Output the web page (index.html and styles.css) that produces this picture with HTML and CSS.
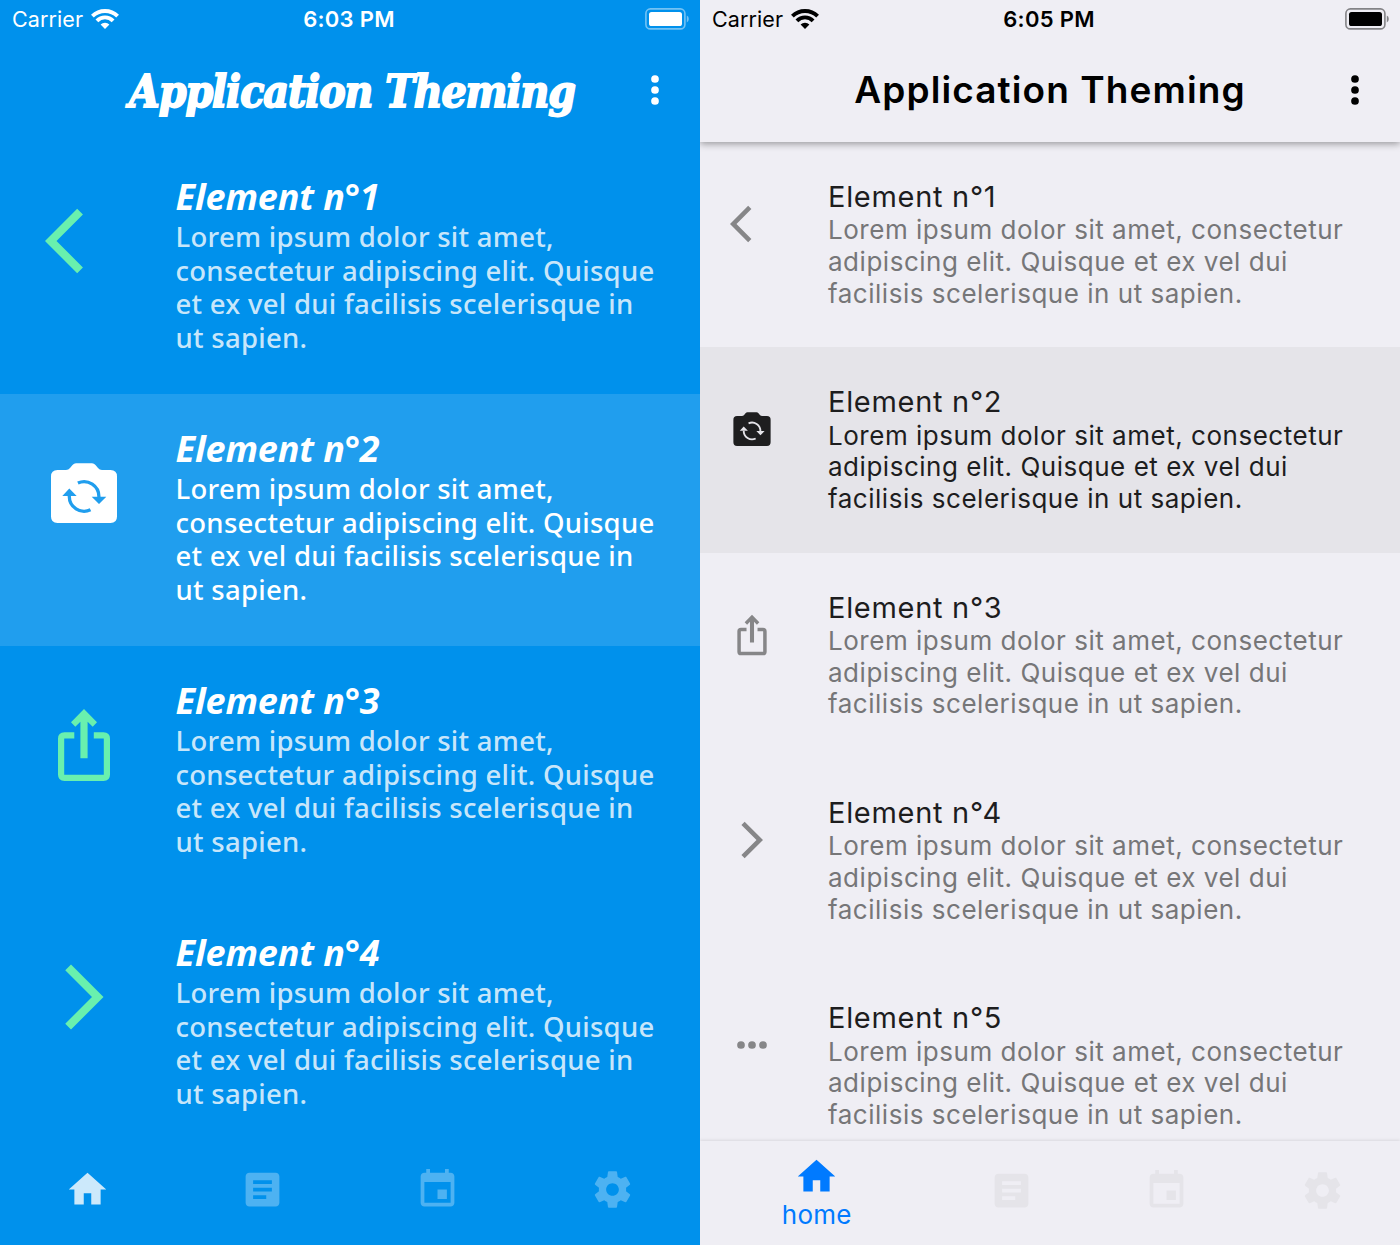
FILE: index.html
```html
<!DOCTYPE html>
<html lang="en">
<head>
<meta charset="utf-8">
<title>Application Theming</title>
<link rel="stylesheet" href="styles.css">
</head>
<body>
<svg class="symbols" aria-hidden="true">
  <symbol id="wifi" viewBox="0 0 28 20">
    <path d="M1.400 7.200a17.800 17.800 0 0 1 25.200 0M5.900 11.800a11.400 11.400 0 0 1 16.200 0" fill="none" stroke="currentColor" stroke-width="3.900"/>
    <path d="M14 20l-4.400-4.400a6.300 6.300 0 0 1 8.800 0z" fill="currentColor"/>
  </symbol>
  <symbol id="battery" viewBox="0 0 44 22">
    <rect x=".9" y=".9" width="39" height="20" rx="4.500" fill="none" stroke="currentColor" stroke-width="1.600" opacity=".45"/>
    <rect x="4" y="4" width="33" height="14" rx="2.600" fill="currentColor"/>
    <path d="M41.800 7.600q2 .8 2 3.400t-2 3.400z" fill="currentColor" opacity=".45"/>
  </symbol>
  <symbol id="more-vert" viewBox="0 0 24 24"><circle cx="12" cy="6" r="2.100"/><circle cx="12" cy="12" r="2.100"/><circle cx="12" cy="18" r="2.100"/></symbol>
  <symbol id="more-horiz" viewBox="0 0 24 24"><circle cx="6" cy="12" r="2.100"/><circle cx="12" cy="12" r="2.100"/><circle cx="18" cy="12" r="2.100"/></symbol>
  <symbol id="back" viewBox="0 0 24 24"><path d="M11.67 3.87L9.9 2.1 0 12l9.9 9.9 1.77-1.77L3.54 12z"/></symbol>
  <symbol id="forward" viewBox="0 0 24 24"><path d="M6.23 20.23L8 22l10-10L8 2 6.23 3.77 14.46 12z"/></symbol>
  <symbol id="camera" viewBox="0 0 78 78">
    <path d="M12.500 16H21Q23.500 16 25 14L27.500 11Q29 9.300 31 9.300H47Q49 9.300 50.500 11L53 14Q54.500 16 57 16H65.500Q72 16 72 22.500V62.500Q72 69 65.500 69H12.500Q6 69 6 62.500V22.500Q6 16 12.500 16Z"/>
    <g class="cutout">
      <path d="M32.900 29A14.900 14.900 0 0 1 53.900 43M24.300 42A14.900 14.900 0 0 0 45.500 55.800" fill="none" stroke-width="3.300"/>
      <path d="M46.700 42.700H61.300L54 50zM17.300 42H31.700L24.300 34.600z" stroke="none"/>
    </g>
  </symbol>
  <symbol id="share" viewBox="0 0 78 78">
    <path d="M29.300 29.400H19.500Q16.100 29.400 16.100 32.800V68.500Q16.100 71.900 19.500 71.900H58.500Q61.900 71.900 61.900 68.500V32.800Q61.900 29.400 58.500 29.400H48.800" fill="none" stroke="currentColor" stroke-width="6.200"/>
    <path d="M39 3L52 16.300 47.700 20.700 42.600 15.700V52.300H35.400V15.700L30.300 20.700 26 16.300z"/>
  </symbol>
  <symbol id="home" viewBox="0 0 24 24"><path d="M10 20v-6h4v6h5v-8h3L12 3 2 12h3v8z"/></symbol>
  <symbol id="article" viewBox="0 0 24 24"><path d="M19 3H5c-1.100 0-2 .9-2 2v14c0 1.100.9 2 2 2h14c1.100 0 2-.9 2-2V5c0-1.100-.9-2-2-2zm-5 14H7v-2h7v2zm3-4H7v-2h10v2zm0-4H7V7h10v2z"/></symbol>
  <symbol id="event" viewBox="0 0 24 24"><path d="M17 12h-5v5h5v-5zM16 1v2H8V1H6v2H5c-1.110 0-1.990.9-1.990 2L3 19c0 1.100.89 2 2 2h14c1.100 0 2-.9 2-2V5c0-1.100-.9-2-2-2h-1V1h-2zm3 18H5V8h14v11z"/></symbol>
  <symbol id="settings" viewBox="0 0 24 24"><path transform="translate(.36 .36) scale(.97)" d="M19.430 12.980c.04-.32.07-.64.07-.98s-.03-.66-.07-.98l2.110-1.650c.19-.15.24-.42.12-.64l-2-3.460c-.12-.22-.39-.3-.61-.22l-2.490 1c-.52-.4-1.080-.73-1.690-.98l-.38-2.650C14.460 2.180 14.250 2 14 2h-4c-.25 0-.46.18-.49.42l-.38 2.650c-.61.25-1.170.59-1.690.98l-2.490-1c-.23-.09-.49 0-.61.22l-2 3.460c-.13.22-.07.49.12.64l2.110 1.650c-.04.32-.07.65-.07.98s.03.66.07.98l-2.110 1.650c-.19.15-.24.42-.12.64l2 3.460c.12.22.39.3.61.22l2.490-1c.52.4 1.080.73 1.690.98l.38 2.650c.03.24.24.42.49.42h4c.25 0 .46-.18.49-.42l.38-2.650c.61-.25 1.170-.59 1.690-.98l2.490 1c.23.09.49 0 .61-.22l2-3.460c.12-.22.07-.49-.12-.64l-2.110-1.650zM12 15.500c-1.930 0-3.500-1.570-3.500-3.500s1.570-3.500 3.500-3.500 3.500 1.570 3.500 3.500-1.570 3.500-3.500 3.500z"/></symbol>
</svg>

<main class="screens">
  <section class="phone phone-blue">
    <header class="header">
      <div class="status">
        <div class="carrier"><span>Carrier</span><svg class="wifi"><use href="#wifi"/></svg></div>
        <span class="time">6:03 PM</span>
        <svg class="battery"><use href="#battery"/></svg>
      </div>
      <div class="toolbar">
        <h1 class="app-title">Application Theming</h1>
        <svg class="menu"><use href="#more-vert"/></svg>
      </div>
    </header>
    <div class="list">
      <article class="item">
        <svg class="item-icon"><use href="#back"/></svg>
        <div class="item-text"><h2>Element n°1</h2><p>Lorem ipsum dolor sit amet,<br>consectetur adipiscing elit. Quisque<br>et ex vel dui facilisis scelerisque in<br>ut sapien.</p></div>
      </article>
      <article class="item selected">
        <svg class="item-icon"><use href="#camera"/></svg>
        <div class="item-text"><h2>Element n°2</h2><p>Lorem ipsum dolor sit amet,<br>consectetur adipiscing elit. Quisque<br>et ex vel dui facilisis scelerisque in<br>ut sapien.</p></div>
      </article>
      <article class="item">
        <svg class="item-icon"><use href="#share"/></svg>
        <div class="item-text"><h2>Element n°3</h2><p>Lorem ipsum dolor sit amet,<br>consectetur adipiscing elit. Quisque<br>et ex vel dui facilisis scelerisque in<br>ut sapien.</p></div>
      </article>
      <article class="item">
        <svg class="item-icon"><use href="#forward"/></svg>
        <div class="item-text"><h2>Element n°4</h2><p>Lorem ipsum dolor sit amet,<br>consectetur adipiscing elit. Quisque<br>et ex vel dui facilisis scelerisque in<br>ut sapien.</p></div>
      </article>
    </div>
    <nav class="tabs">
      <a class="tab active"><svg><use href="#home"/></svg></a>
      <a class="tab"><svg><use href="#article"/></svg></a>
      <a class="tab"><svg><use href="#event"/></svg></a>
      <a class="tab"><svg><use href="#settings"/></svg></a>
    </nav>
  </section>

  <section class="phone phone-light">
    <header class="header">
      <div class="status">
        <div class="carrier"><span>Carrier</span><svg class="wifi"><use href="#wifi"/></svg></div>
        <span class="time">6:05 PM</span>
        <svg class="battery"><use href="#battery"/></svg>
      </div>
      <div class="toolbar">
        <h1 class="app-title">Application Theming</h1>
        <svg class="menu"><use href="#more-vert"/></svg>
      </div>
    </header>
    <div class="list">
      <article class="item">
        <svg class="item-icon"><use href="#back"/></svg>
        <div class="item-text"><h2>Element n°1</h2><p>Lorem ipsum dolor sit amet, consectetur<br>adipiscing elit. Quisque et ex vel dui<br>facilisis scelerisque in ut sapien.</p></div>
      </article>
      <article class="item selected">
        <svg class="item-icon"><use href="#camera"/></svg>
        <div class="item-text"><h2>Element n°2</h2><p>Lorem ipsum dolor sit amet, consectetur<br>adipiscing elit. Quisque et ex vel dui<br>facilisis scelerisque in ut sapien.</p></div>
      </article>
      <article class="item">
        <svg class="item-icon"><use href="#share"/></svg>
        <div class="item-text"><h2>Element n°3</h2><p>Lorem ipsum dolor sit amet, consectetur<br>adipiscing elit. Quisque et ex vel dui<br>facilisis scelerisque in ut sapien.</p></div>
      </article>
      <article class="item">
        <svg class="item-icon"><use href="#forward"/></svg>
        <div class="item-text"><h2>Element n°4</h2><p>Lorem ipsum dolor sit amet, consectetur<br>adipiscing elit. Quisque et ex vel dui<br>facilisis scelerisque in ut sapien.</p></div>
      </article>
      <article class="item">
        <svg class="item-icon"><use href="#more-horiz"/></svg>
        <div class="item-text"><h2>Element n°5</h2><p>Lorem ipsum dolor sit amet, consectetur<br>adipiscing elit. Quisque et ex vel dui<br>facilisis scelerisque in ut sapien.</p></div>
      </article>
    </div>
    <nav class="tabs">
      <a class="tab active"><svg><use href="#home"/></svg><span>home</span></a>
      <a class="tab"><svg><use href="#article"/></svg></a>
      <a class="tab"><svg><use href="#event"/></svg></a>
      <a class="tab"><svg><use href="#settings"/></svg></a>
    </nav>
  </section>
</main>
</body>
</html>
```

FILE: styles.css
```css
* { box-sizing: border-box; }
body { margin: 0; font-family: Inter, "Liberation Sans", sans-serif; }
h1, h2, p { margin: 0; font-weight: inherit; }
svg { display: block; fill: currentColor; flex: none; }
.symbols { display: none; }

.screens { display: grid; grid-template-columns: 700px 700px; height: 1245px; overflow: hidden; }
.phone { display: flex; flex-direction: column; height: 1245px; overflow: hidden; }
.phone-blue { background: #0091ec; color: #fff; --row: #209eee; }
.phone-light { background: #efeef4; color: #000; --row: #e5e4e9; }

/* Header */
.header { flex: none; height: 142px; z-index: 1; }
.phone-light .header { background: #efeef4; box-shadow: 0 2px 7px rgba(0, 0, 0, .36); clip-path: inset(0 0 -16px 0); }
.status { display: grid; grid-template-columns: 1fr auto 1fr; align-items: center; height: 38px; padding: 0 11px 0 12px; font-size: 22px; line-height: 38px; }
.carrier { display: flex; align-items: center; gap: 8px; }
.carrier span { font-size: 21.500px; letter-spacing: .1px; }
.wifi { width: 28px; height: 20px; }
.time { font-weight: 600; letter-spacing: .3px; margin-right: 3px; }
.battery { width: 44px; height: 22px; justify-self: end; margin-top: -1px; }
.toolbar { display: grid; grid-template-columns: 90px 1fr 90px; align-items: center; height: 104px; }
.app-title { grid-column: 2; text-align: center; white-space: nowrap; }
.phone-blue .app-title { font: italic bold 44px/60px "DejaVu Serif Condensed", "DejaVu Serif", serif; font-stretch: condensed; letter-spacing: -1px; -webkit-text-stroke: 1.800px currentColor; padding: 4px 0 0 4px; }
.phone-light .app-title { font-size: 37px; line-height: 60px; font-weight: 600; letter-spacing: 1.100px; }
.menu { width: 44px; height: 44px; justify-self: center; }

/* List */
.list { flex: 1; min-height: 0; overflow: hidden; }
.item { display: flex; align-items: flex-start; }
.item.selected { background: var(--row); }
.item-text { white-space: nowrap; }
.cutout { fill: var(--row); stroke: var(--row); }

.phone-blue .item { height: 252px; padding: 34px 0 0 45px; gap: 52.500px; }
.phone-blue .item-icon { width: 78px; height: 78px; margin-top: 25.700px; color: #69f0ae; }
.phone-blue .selected .item-icon { color: #fff; }
.phone-blue h2 { font: italic bold 36px/42px "Noto Sans", "Open Sans", sans-serif; letter-spacing: -.15px; }
.phone-blue p { font: 500 27.500px/33.600px "Noto Sans", "Open Sans", sans-serif; letter-spacing: .28px; color: rgba(255, 255, 255, .8); margin-top: 2px; }
.phone-blue .selected p { color: #fff; }

.phone-light .item { height: 205.333px; padding: 36px 0 0 30px; gap: 54px; }
.phone-light .item-icon { width: 44px; height: 44px; margin-top: 24px; color: #868688; }
.phone-light .selected .item-icon { color: #1e1e1f; }
.phone-light h2 { font-size: 29px; line-height: 37px; color: #1d1d1e; letter-spacing: .7px; }
.phone-light p { font-size: 26px; line-height: 31.700px; color: #767678; letter-spacing: .52px; margin-top: -.7px; }
.phone-light .selected p { color: #1d1d1e; }

/* Bottom navigation */
.tabs { flex: none; display: grid; }
.tab { display: flex; flex-direction: column; align-items: center; }
.tab svg { width: 45px; height: 45px; }
.phone-blue .tabs { grid-template-columns: repeat(4, 1fr); height: 95px; padding-top: 16.500px; }
.phone-blue .tab { color: rgba(255, 255, 255, .3); }
.phone-blue .tab.active { color: rgba(255, 255, 255, .8); }
.phone-light .tabs { grid-template-columns: 3fr 2fr 2fr 2fr; height: 104px; z-index: 1; background: #efeef4; box-shadow: 0 -1px 3px rgba(0, 0, 0, .09); }
.phone-light .tab { color: #e5e4e9; padding-top: 26.500px; }
.phone-light .tab.active { color: #007aff; padding-top: 13px; }
.tab span { font-size: 26px; line-height: 32px; letter-spacing: .2px; }
```
